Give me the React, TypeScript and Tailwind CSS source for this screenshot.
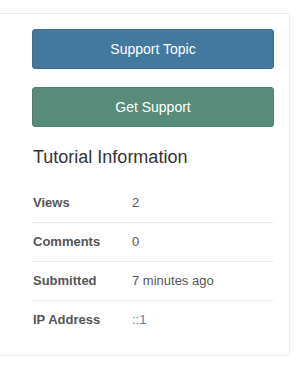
export default function App() {
  const rows = [
    { label: 'Views', value: '2' },
    { label: 'Comments', value: '0' },
    { label: 'Submitted', value: '7 minutes ago' },
    { label: 'IP Address', value: '::1', link: true },
  ]

  return (
    <div className="w-[307px] h-[375px] bg-white pt-[13px] font-['Liberation_Sans',Arial,sans-serif]">
      <div className="w-[290px] border-t border-r border-b border-[#eeeeee] bg-white pl-[32px] pr-[15px] pt-[15px] pb-[16px]">
        <div className="flex flex-col gap-[18px]">
          <button className="h-[40px] w-full rounded-[3px] border border-[#3d6f93] bg-[#44799f] text-[14px] text-white">
            Support Topic
          </button>
          <button className="h-[40px] w-full rounded-[3px] border border-[#4e806e] bg-[#568c79] text-[14px] text-white">
            Get Support
          </button>
        </div>

        <h3 className="mt-[20px] pl-[1px] text-[18px] leading-[20px] text-[#333333]">
          Tutorial Information
        </h3>

        <div className="mt-[17px]">
          {rows.map((row, i) => (
            <div
              key={row.label}
              className={`flex items-center text-[13px] ${i > 0 ? 'h-[39px] border-t border-[#eeeeee]' : 'h-[38px]'}`}
            >
              <span className="w-[100px] pl-[1px] font-bold text-[#555555]">{row.label}</span>
              <span className={row.link ? 'text-[#4a7fb0]' : 'text-[#555555]'}>{row.value}</span>
            </div>
          ))}
        </div>
      </div>
    </div>
  )
}
